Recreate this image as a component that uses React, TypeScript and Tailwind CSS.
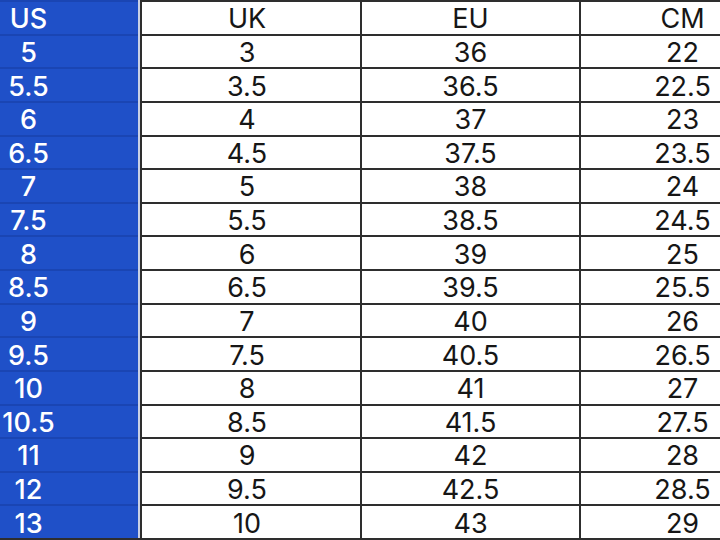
import React from "react";

const rows: [string, string, string, string][] = [
  ["US", "UK", "EU", "CM"],
  ["5", "3", "36", "22"],
  ["5.5", "3.5", "36.5", "22.5"],
  ["6", "4", "37", "23"],
  ["6.5", "4.5", "37.5", "23.5"],
  ["7", "5", "38", "24"],
  ["7.5", "5.5", "38.5", "24.5"],
  ["8", "6", "39", "25"],
  ["8.5", "6.5", "39.5", "25.5"],
  ["9", "7", "40", "26"],
  ["9.5", "7.5", "40.5", "26.5"],
  ["10", "8", "41", "27"],
  ["10.5", "8.5", "41.5", "27.5"],
  ["11", "9", "42", "28"],
  ["12", "9.5", "42.5", "28.5"],
  ["13", "10", "43", "29"],
];

export default function App() {
  return (
    <div
      className="w-[720px] h-[540px] bg-white overflow-hidden flex flex-col"
      style={{ fontFamily: "Inter, 'Noto Sans', sans-serif" }}
    >
      <div className="flex flex-col flex-1 border-b-2 border-[#2e2e2e]">
        {rows.map((r, i) => (
          <div key={i} className="flex flex-1 min-h-0">
            <div className="w-[138px] bg-[#1f50c8] border-t-2 border-[#1a45b3] flex items-center">
              <span className="w-[57px] text-center text-white text-[27px] font-medium leading-none pt-[2px]">
                {r[0]}
              </span>
            </div>
            <div className="w-[2px] bg-[#c9d1e4]" />
            <div className="w-[220px] border-t-2 border-l-2 border-[#2e2e2e] flex items-center justify-center text-[27px] font-normal text-[#161616] leading-none pt-[2px] pr-[8px]">
              {r[1]}
            </div>
            <div className="w-[219px] border-t-2 border-l-2 border-[#2e2e2e] flex items-center justify-center text-[27px] font-normal text-[#161616] leading-none pt-[2px]">
              {r[2]}
            </div>
            <div className="w-[141px] border-t-2 border-l-2 border-[#2e2e2e] flex items-center text-[27px] font-normal text-[#161616] leading-none pt-[2px]">
              <span className="ml-[64px] w-[76px] text-center">{r[3]}</span>
            </div>
          </div>
        ))}
      </div>
    </div>
  );
}
